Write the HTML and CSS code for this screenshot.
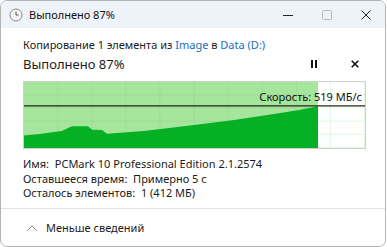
FILE: index.html
```html
<!doctype html>
<html>
<head>
    <meta charset="UTF-8">
    <title>Выполнено 87%</title>
    <link rel="stylesheet" href="styles.css">
</head>
<body>
    <div class="window">
        <div class="titlebar">
            <svg class="clock" width="14" height="14" viewBox="0 0 14 14">
                <circle cx="7" cy="7" r="6" fill="#f4f4f4" stroke="#8a8a8a" stroke-width="1"/>
                <path d="M7 3.5 V7 H9.5" fill="none" stroke="#555" stroke-width="1"/>
            </svg>
            <span class="title">Выполнено 87%</span>
            <div class="caption-buttons">
                <span class="cap-btn">
                    <svg width="10" height="10" viewBox="0 0 10 10"><path d="M0 5.5 H10" stroke="#222" stroke-width="1"/></svg>
                </span>
                <span class="cap-btn">
                    <svg width="10" height="10" viewBox="0 0 10 10"><rect x="0.5" y="0.5" width="9" height="9" rx="1" fill="none" stroke="#b8b8b8" stroke-width="1"/></svg>
                </span>
                <span class="cap-btn">
                    <svg width="10" height="10" viewBox="0 0 10 10"><path d="M0.5 0.5 L9.5 9.5 M9.5 0.5 L0.5 9.5" stroke="#222" stroke-width="1"/></svg>
                </span>
            </div>
        </div>

        <div class="content">
            <p class="source">Копирование 1 элемента из <a href="#">Image</a> в <a href="#">Data (D:)</a></p>
            <div class="status-row">
                <h1>Выполнено 87%</h1>
                <div class="actions">
                    <svg width="8" height="8" viewBox="0 0 8 8"><rect x="1" y="0" width="2" height="8" fill="#111"/><rect x="5" y="0" width="2" height="8" fill="#111"/></svg>
                    <svg width="8" height="8" viewBox="0 0 8 8"><path d="M0.7 0.7 L7.3 7.3 M7.3 0.7 L0.7 7.3" stroke="#111" stroke-width="1.6"/></svg>
                </div>
            </div>

            <div class="chart">
                <svg class="graph" width="341" height="66" viewBox="0 0 341 66">
                    <defs>
                        <pattern id="grid" width="34.1" height="13.2" patternUnits="userSpaceOnUse">
                            <path d="M34.1 0 V13.2 M0 13.2 H34.1" fill="none" stroke="#c9efc9" stroke-width="1"/>
                        </pattern>
                        <pattern id="grid-done" width="34.1" height="13.2" patternUnits="userSpaceOnUse">
                            <path d="M34.1 0 V13.2 M0 13.2 H34.1" fill="none" stroke="#8fd68a" stroke-width="1"/>
                        </pattern>
                    </defs>
                    <rect x="0" y="0" width="341" height="66" fill="url(#grid)"/>
                    <rect x="0" y="0" width="294" height="66" fill="#a6e59c"/>
                    <rect x="0" y="0" width="294" height="66" fill="url(#grid-done)"/>
                    <polygon fill="#06b025" points="0,53.5 16,52 30,50 38,49 44,46 48,44.3 64,44.3 68,47.7 78,48 83,51.7 120,49 170,43 210,38 250,32 275,28 294,24.3 294,66 0,66"/>
                    <path d="M0 23.8 H341" stroke="#222" stroke-width="1.2"/>
                </svg>
                <span class="speed">Скорость: 519 МБ/с</span>
            </div>

            <div class="details">
                <p>Имя:&nbsp; PCMark 10 Professional Edition 2.1.2574</p>
                <p>Оставшееся время:&nbsp; Примерно 5 с</p>
                <p>Осталось элементов:&nbsp; 1 (412 МБ)</p>
            </div>
        </div>

        <div class="footer">
            <svg width="10" height="6" viewBox="0 0 10 6"><path d="M0.5 5.5 L5 1 L9.5 5.5" fill="none" stroke="#8a8a8a" stroke-width="1"/></svg>
            <span>Меньше сведений</span>
        </div>
    </div>
</body>
</html>
```

FILE: styles.css
```css
body {
    margin: 0;
    background-color: #ffffff;
    font-family: "Noto Sans", sans-serif;
    color: #1b1b1b;
}

p, h1 {
    margin: 0;
}

.window {
    width: 384px;
    height: 245px;
    border: 1px solid #b4b4b4;
    border-radius: 7px;
    overflow: hidden;
    display: flex;
    flex-direction: column;
    background-color: #ffffff;
}

.titlebar {
    height: 27px;
    flex: none;
    display: flex;
    align-items: center;
    padding-left: 8px;
    background-color: #eef3f9;
}

.clock {
    margin-right: 6px;
}

.title {
    font-size: 11px;
    color: #111;
}

.caption-buttons {
    margin-left: auto;
    display: flex;
}

.cap-btn {
    width: 39px;
    height: 27px;
    display: flex;
    align-items: center;
    justify-content: center;
}

.content {
    flex: 1;
    padding: 9px 22px 0 22px;
}

.source {
    font-size: 11px;
    line-height: 15px;
}

a {
    color: #1a6dc2;
    text-decoration: none;
}

.status-row {
    display: flex;
    align-items: center;
    margin-top: 2px;
}

h1 {
    font-size: 13px;
    font-weight: normal;
    line-height: 20px;
}

.actions {
    margin-left: auto;
    display: flex;
    gap: 33px;
    padding-right: 4px;
}

.chart {
    position: relative;
    margin-top: 7px;
    width: 341px;
    height: 66px;
    border: 1px solid #cfcfcf;
}

.graph {
    display: block;
}

.speed {
    position: absolute;
    right: 3px;
    top: 7px;
    font-size: 11px;
    line-height: 15px;
    color: #111;
}

.details {
    margin-top: 8px;
    font-size: 11px;
    line-height: 14.5px;
}

.footer {
    height: 37px;
    flex: none;
    border-top: 1px solid #e3e3e3;
    display: flex;
    align-items: center;
    padding-left: 26px;
    gap: 9px;
    font-size: 11px;
}
```
